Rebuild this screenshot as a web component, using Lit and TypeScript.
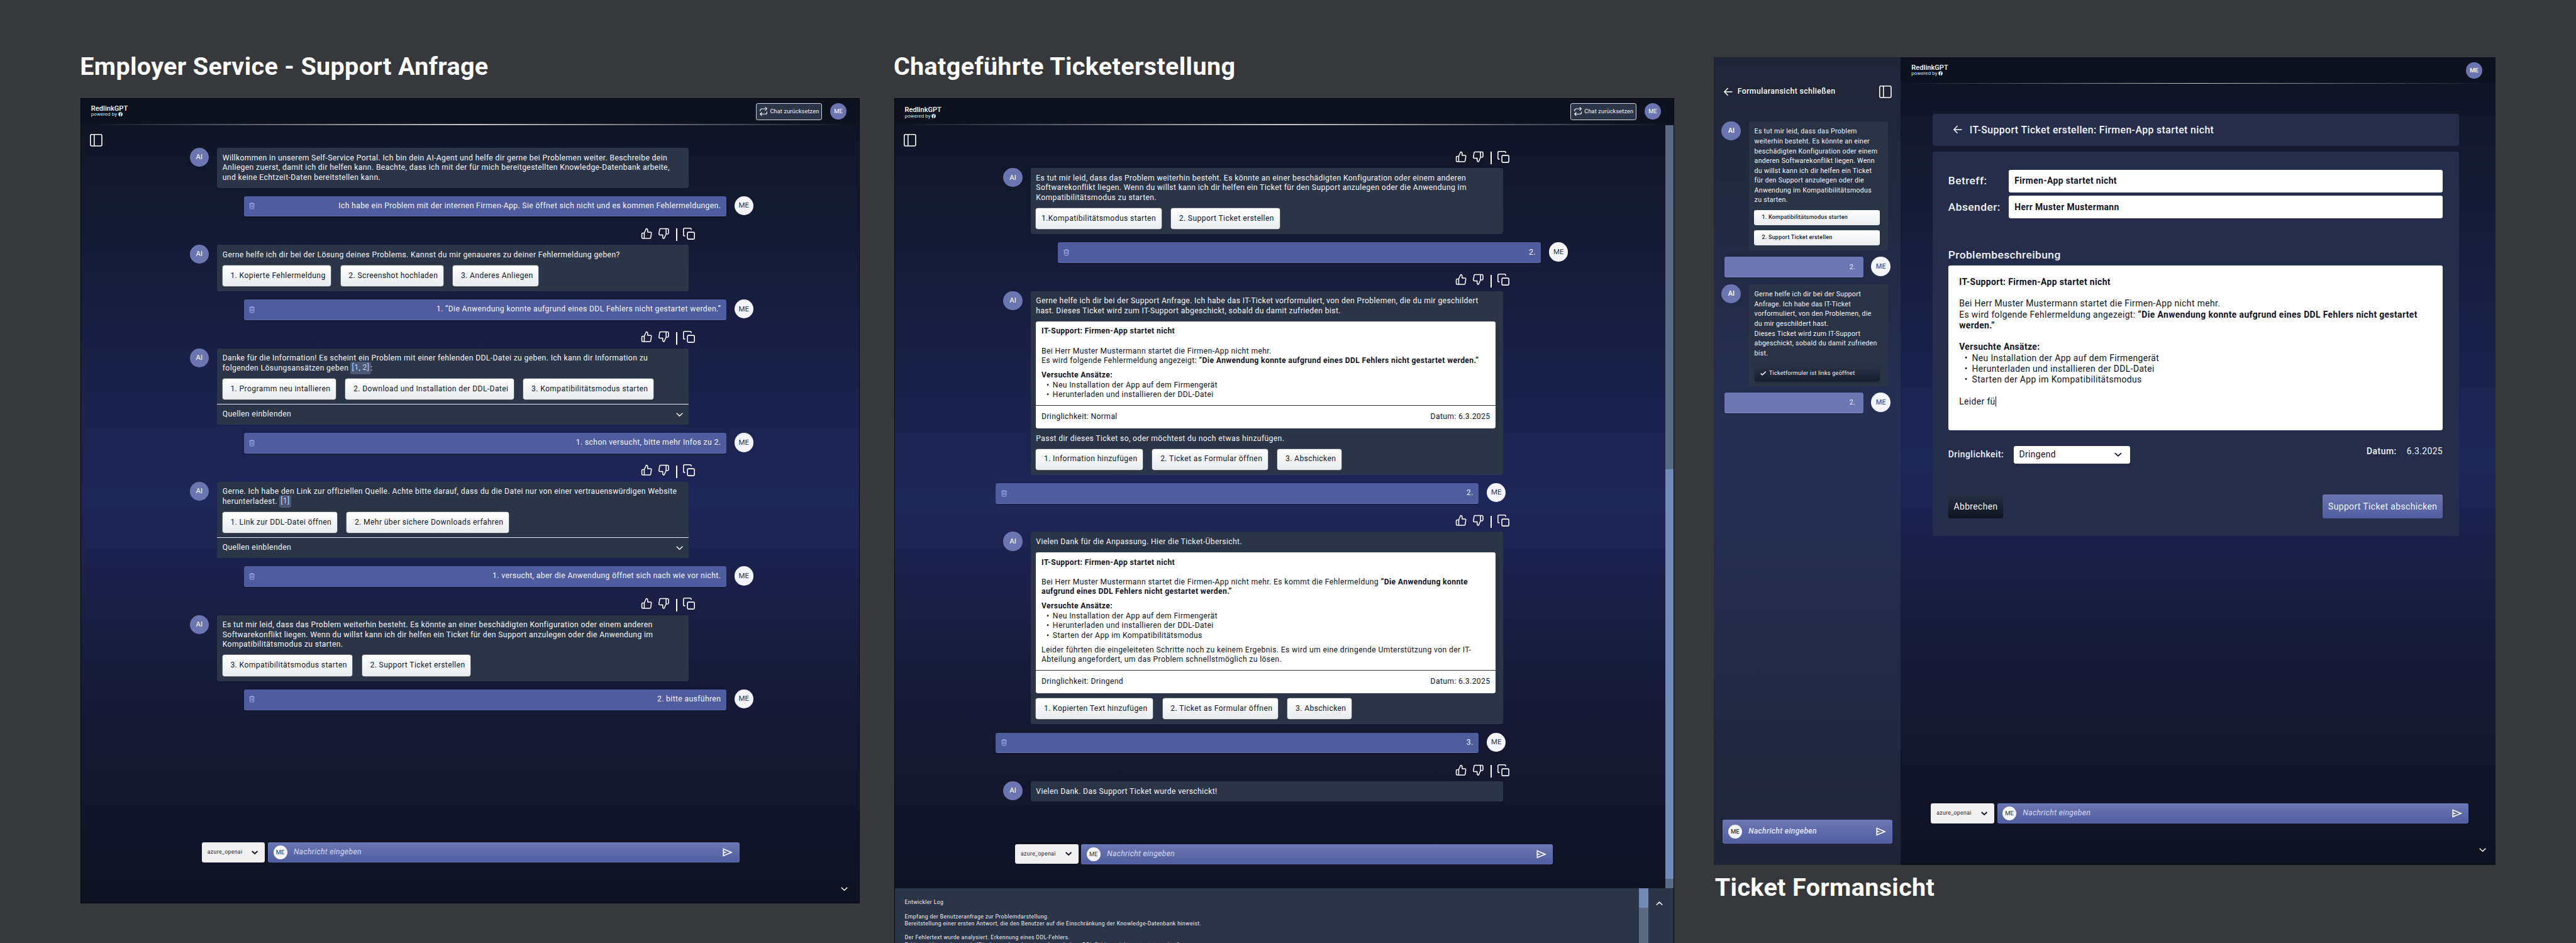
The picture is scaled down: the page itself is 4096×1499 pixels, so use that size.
import { LitElement, html, svg, css, nothing, TemplateResult } from "lit";
import { customElement } from "lit/decorators.js";
import { classMap } from "lit/directives/class-map.js";

type Content = TemplateResult | string;

const icon = (cls: string, box: string, body: unknown) =>
  html`<svg class="icon ${cls}" viewBox=${box} aria-hidden="true">${body}</svg>`;

const thumbUp = () =>
  icon("i-thumb", "0 0 24 24", svg`<path d="M14 9V5a3 3 0 0 0-3-3l-4 9v11h11.28a2 2 0 0 0 2-1.7l1.38-9a2 2 0 0 0-2-2.3zM7 22H4a2 2 0 0 1-2-2v-7a2 2 0 0 1 2-2h3"/>`);
const thumbDown = () =>
  icon("i-thumb", "0 0 24 24", svg`<path d="M10 15v4a3 3 0 0 0 3 3l4-9V2H5.72a2 2 0 0 0-2 1.7l-1.38 9a2 2 0 0 0 2 2.3zm7-13h2.67A2.31 2.31 0 0 1 22 4v7a2.31 2.31 0 0 1-2.33 2H17"/>`);
const copy = () =>
  icon("i-copy", "0 0 24 24", svg`<rect x="9" y="9" width="14" height="14" rx="2"/><path d="M3.6 16.6c-1.4 0-2.6-1-2.6-2.4V3.4C1 2 2 1 3.4 1h10.8c1.4 0 2.4 1 2.4 2.6"/>`);
const sidebarIcon = () =>
  icon("i-panel", "0 0 25 25", svg`<rect x="1" y="1" width="23" height="23" rx="2.5"/><path d="M8.6 1v23"/>`);
const repeat = () =>
  icon("i-repeat", "0 0 24 24", svg`<path d="M17 1l4 4-4 4M3 11V9a4 4 0 0 1 4-4h14M7 23l-4-4 4-4M21 13v2a4 4 0 0 1-4 4H3"/>`);
const trash = () =>
  icon("i-trash", "0 0 12 14", svg`<path d="M.4 2.4h11.2M1.8 2.4v9.2c0 1 .5 1.6 1.5 1.6h5.4c1 0 1.5-.6 1.5-1.6V2.4M3.8 2.2V1h4.4v1.2M4.4 5v5.6M7.6 5v5.6"/>`);
const send = () =>
  icon("i-send", "0 0 24 24", svg`<path d="M3 20V4l19 8-19 8zm2-3l11.85-5L5 7v3.5l6 1.5-6 1.5V17z"/>`);
const chevron = (cls = "") => icon(`i-chev ${cls}`, "0 0 14 8", svg`<path d="M1 1l6 5.6L13 1"/>`);
const arrowLeft = () => icon("i-arrow", "0 0 18 18", svg`<path d="M17.5 9H1.6M8.6 1.4L1.2 9l7.4 7.6"/>`);
const check = () => icon("i-check", "0 0 12 9", svg`<path d="M1 4.6l3 3L11 1"/>`);
const brandMark = () =>
  html`<svg class="mark" viewBox="0 0 10 10" aria-hidden="true"><circle cx="5" cy="5" r="4.8" fill="#c5e8f6"></circle><path d="M5 9.9V4.6c0-1.3.7-2 2.1-2" fill="none" stroke="#0e121e" stroke-width="1.4"></path></svg>`;

const brand = () => html`
  <div class="brand">
    <span class="brand-name">RedlinkGPT</span>
    <span class="brand-sub">powered by ${brandMark()}</span>
  </div>`;

const header = (withReset: boolean) => html`
  <header class="head">
    ${brand()}
    <div class="head-right">
      ${withReset ? html`<button class="reset">${repeat()}<span>Chat zurücksetzen</span></button>` : nothing}
      <span class=${classMap({ "head-me": true, strong: !withReset })}>ME</span>
    </div>
  </header>
  <div class="rule"></div>`;

const actions = () => html`
  <div class="actions">${thumbUp()}${thumbDown()}<i class="bar"></i>${copy()}</div>`;

const options = (labels: string[]) => html`
  <div class="options">
    ${labels.map((l) => html`<button class=${classMap({ opt: true, tight: !/^\d\. /.test(l) })}>${l}</button>`)}
  </div>`;

const sources = () => html`
  <div class="sources"><span>Quellen einblenden</span>${chevron()}</div>`;

const ai = (body: unknown) => html`
  <div class="row ai"><span class="avatar">AI</span><div class="bubble">${body}</div></div>`;

const me = (text: string, shifted = false) => html`
  <div class=${classMap({ row: true, user: true, shifted })}>
    <div class="ubar">${trash()}<span>${text}</span></div>
    <span class="avatar light">ME</span>
  </div>`;

const composer = () => html`
  <div class="composer">
    <div class="model"><span>azure_openai</span>${chevron("dark")}</div>
    <div class="input"><span class="input-me">ME</span><span class="ph">Nachricht eingeben</span>${send()}</div>
  </div>`;

const ticket = (body: Content, urgency: string) => html`
  <div class="ticket">
    <div class="ticket-body">
      <p class="b">IT-Support: Firmen-App startet nicht</p>
      ${body}
    </div>
    <div class="ticket-foot"><span>Dringlichkeit: ${urgency}</span><span>Datum: 6.3.2025</span></div>
  </div>`;

const sorry = html`<p>Es tut mir leid, dass das Problem weiterhin besteht. Es könnte an einer beschädigten Konfiguration oder einem anderen<br />Softwarekonflikt liegen. Wenn du willst kann ich dir helfen ein Ticket für den Support anzulegen oder die Anwendung im<br />Kompatibilitätsmodus zu starten.</p>`;

@customElement("app-root")
export class AppRoot extends LitElement {
  static styles = css`
    :host { display: block; width: 100vw; height: 100vh; overflow: hidden; background: #37383c; }
    * { box-sizing: border-box; }
    p, h1, ul { margin: 0; padding: 0; }
    button { font: inherit; letter-spacing: inherit; border: 0; margin: 0; }
    .canvas {
      zoom: 0.790276; width: 5183px; height: 1897px; overflow: hidden; display: flex; align-items: flex-start;
      padding-left: 162px; font: 400 15.4px/19.7px Roboto, "Liberation Sans", sans-serif; letter-spacing: 0.47px;
      color: #f3f5fb; white-space: nowrap;
    }
    .col { display: flex; flex-direction: column; flex: none; }
    .c1 { width: 1568px; padding-top: 105.6px; }
    .c2 { width: 1569.5px; padding-top: 105.6px; margin-left: 69px; }
    .c3 { width: 1573px; padding-top: 115px; margin-left: 79.5px; }
    h1 { font: 700 50px/58.6px Roboto, sans-serif; letter-spacing: 0.45px; color: #fff; margin: 0 0 32.8px -1px; }
    .c3 h1 { margin: 16px 0 0 2.5px; }

    .icon { display: block; flex: none; fill: none; stroke: #fff; stroke-width: 2; stroke-linejoin: round; overflow: visible; }
    .i-thumb { width: 23.5px; height: 23.5px; }
    .i-copy { width: 24px; height: 24px; stroke-linecap: round; }
    .i-panel { width: 25px; height: 25px; }
    .i-repeat { width: 18px; height: 18px; stroke-width: 1.9; stroke-linecap: round; }
    .i-trash { width: 11.5px; height: 13.4px; stroke: #a9b2ea; stroke-width: 1.3; }
    .i-send { width: 25px; height: 25px; fill: #fff; stroke: none; }
    .i-chev { width: 14px; height: 8px; stroke-linejoin: miter; }
    .i-chev.dark { stroke: #10131f; width: 13px; stroke-width: 2.6; }
    .i-chev.up { transform: rotate(180deg); }
    .i-arrow { width: 17.5px; height: 17.5px; stroke-linejoin: miter; }
    .i-check { width: 12px; height: 9px; }

    .board {
      display: flex; flex-direction: column; position: relative; height: 1620px; border: 1px solid #05070c;
      background: linear-gradient(#0f131f 0, #0f131f 53px, #101525 53px, #1f2659 50%, #181c3d 68%, #0f1220 100%);
    }
    .tall { height: 1700px; background-size: 100% 1620px; background-repeat: no-repeat; }
    .head { height: 51px; flex: none; display: flex; justify-content: space-between; padding: 13.5px 25.5px 0 20px; background: #0e121e; }
    .rule { height: 2px; flex: none; margin: 0 16px; background: linear-gradient(90deg, transparent, #c9c6c4 50%, transparent); }
    .brand { display: flex; flex-direction: column; padding-top: 0; }
    .c2 .brand { padding-top: 2px; }
    .brand-name { font: 500 14px/14px Roboto; letter-spacing: 0.06px; color: #fff; }
    .brand-sub { font-size: 10px; line-height: 10px; letter-spacing: 0.1px; color: #c5e8f6; display: flex; align-items: center; gap: 2px; margin-top: -0.5px; }
    .c2 .brand-sub { margin-top: 1px; }
    .mark { width: 9px; height: 9px; }
    .head-right { display: flex; gap: 17px; margin-top: -4px; }
    .reset {
      height: 33.5px; width: 132.5px; display: flex; align-items: center; gap: 4.5px; padding: 0 0 0 4.5px; border: 1px solid #cdd2dc;
      border-radius: 4px; background: #2c3547; color: #f3f5fb; font-size: 11.5px; letter-spacing: 0.24px;
    }
    .head-me {
      width: 32.6px; height: 33px; border-radius: 50%; background: #6b76b1; color: #fff; font-size: 12px; letter-spacing: 0;
      display: flex; align-items: center; justify-content: center;
    }
    .strong { font-weight: 500; }

    .toggle { position: absolute; left: 17.8px; top: 71.8px; }
    .chat { display: flex; flex-direction: column; margin-left: 218.6px; width: 1134px; margin-top: 46.2px; }
    .c2 .chat { margin-left: 202px; width: 1153px; margin-top: 30.4px; }
    .row { display: flex; align-items: flex-start; gap: 16.5px; }
    .avatar {
      width: 38.3px; height: 38.3px; border-radius: 50%; background: #6b76b1; color: #fff; flex: none; letter-spacing: 0;
      display: flex; align-items: center; justify-content: center; font-size: 14.5px;
    }
    .light { background: #f3f4fc; color: #2c3547; }
    .c2 .ai { padding-left: 16.5px; }
    .bubble { width: 948.5px; border-radius: 4px; background: #2c3547; padding: 11px 11px 10.3px; display: flex; flex-direction: column; }
    .c2 .bubble { width: 950.3px; }
    .user { margin-top: 16.7px; justify-content: flex-end; }
    .shifted { margin-right: 125.5px; }
    .ubar {
      width: 970.5px; height: 41.4px; border-radius: 4px; background: #4f5d9e; border-bottom: 1px solid #606db3; box-shadow: 0 1px 2px rgba(0, 0, 0, 0.4);
      padding: 0 10.6px 0 11px; display: flex; align-items: center; justify-content: space-between;
    }
    .c2 .ubar { width: 972px; }
    .options { display: flex; gap: 19.4px; margin-top: 10.6px; }
    .opt {
      height: 42px; padding: 0 11px 0 16px; border-radius: 4px; color: #141827; background: linear-gradient(#fff, #e9ebef);
      box-shadow: 0 0 0 0.6px rgba(255, 255, 255, 0.5), 0 1px 2px rgba(0, 0, 0, 0.4);
    }
    .tight { padding-left: 11px; }
    .actions { height: 56.5px; display: flex; padding: 21.9px 0 0 908px; }
    .c2 .actions { padding-left: 926.2px; }
    .actions .i-thumb + .i-thumb { margin-left: 10.3px; }
    .bar { width: 2px; height: 25px; background: #fff; margin: 2px 12.3px 0 13.2px; }
    .sources {
      height: 42.4px; margin: 8.4px -11px -10.3px; padding: 0 11px; border-top: 2px solid #e3e7f0; display: flex;
      align-items: center; justify-content: space-between;
    }
    .ref { background: #4a5875; color: #c4d5f0; border-radius: 4px; padding: 3px 3px 4px; margin: 0 -0.5px; }

    .ticket { margin: 10.3px 4px 0 0; border-radius: 4px; background: #fff; color: #10131f; }
    .ticket-body { padding: 11px 11px 10.5px; }
    .ticket-body p + p, .gap-l { margin-top: 19.7px; }
    .ticket-body .gap-s { margin-top: 9.2px; }
    .b { font-weight: 700; }
    ul { list-style: none; }
    li { display: flex; padding-left: 10.2px; }
    li::before { content: "•"; width: 12.4px; font-size: 15.4px; letter-spacing: 0; }
    .ticket-foot { border-top: 1.5px solid #2c3547; padding: 13px 10.5px 12.6px 11px; display: flex; justify-content: space-between; }
    .follow { margin-top: 11.4px; }

    .composer { position: absolute; left: 243px; top: 1496.5px; display: flex; gap: 6px; }
    .c2 .composer { left: 242.5px; top: 1499.5px; }
    .c1 .input, .c1 .model { height: 39.6px; }
    .model {
      width: 127px; height: 40px; border-radius: 4px; background: #f0f0f1; color: #1d2233; display: flex; align-items: center;
      justify-content: space-between; padding: 0 13.5px 0 11px; font-size: 11px; letter-spacing: 0.46px;
    }
    .input {
      width: 948.5px; height: 41px; border-radius: 4px; background: linear-gradient(#6c78b2, #505d9f); display: flex; align-items: center;
      padding: 0 11px 0 10.7px; box-shadow: inset 0 0 0 1px rgba(108, 122, 200, 0.6);
    }
    .input-me {
      width: 28px; height: 28px; border-radius: 50%; background: #f3f4fc; color: #2c3547; font-size: 12px; letter-spacing: 0;
      display: flex; align-items: center; justify-content: center;
    }
    .ph { font-style: italic; margin-left: 13px; color: #d3d9f7; flex: 1; letter-spacing: 0.43px; }
    .corner { position: absolute; right: 22.5px; bottom: 24px; }

    .track { position: absolute; right: 0; top: 53px; width: 17px; height: 1535px; background: #5b6a83; display: flex; flex-direction: column; }
    .thumb { margin-top: 693px; height: 823.5px; background: #738ab5; }
    .log {
      position: absolute; left: 0; right: 0; top: 1588px; height: 112px; background: #2c3547; border-radius: 3px 3px 0 0;
      display: flex; font-size: 11px; line-height: 14.2px; letter-spacing: 0.49px; color: #eceff6;
    }
    .log-text { flex: 1; padding: 22.5px 0 0 20px; }
    .log-track { width: 18.5px; background: #5b6a83; }
    .log-thumb { display: block; height: 39.5px; background: #738ab5; }
    .log-tools { width: 50.5px; display: flex; justify-content: flex-start; padding: 26.5px 0 0 15px; }

    .split { height: 1625px; display: flex; }
    .side {
      width: 376px; display: flex; flex-direction: column; position: relative; font-size: 13.5px; letter-spacing: 0.32px;
      background: linear-gradient(#202536, #272f55 50%, #20253a 96%, #1f2436);
    }
    .side-head { display: flex; align-items: center; padding: 0 18.5px 0 21px; margin-top: 57px; height: 25px; font-weight: 500; font-size: 15.5px; letter-spacing: 0.52px; color: #fff; }
    .side-head span { flex: 1; margin-left: 9.5px; }
    .side-chat { display: flex; flex-direction: column; gap: 12.8px; margin: 47px 19px 0 16px; }
    .side .row { gap: 16px; }
    .side .avatar { width: 39px; height: 38.6px; font-weight: 500; font-size: 14px; }
    .side .light { color: #4c59a5; }
    .side .bubble { width: 279.7px; background: #2b3446; padding: 11px 11px 10.8px; }
    .side .user { margin: 0; justify-content: flex-start; padding-left: 5.3px; gap: 15px; }
    .side .ubar { width: 280.7px; height: 41.8px; background: #6b77b2; justify-content: flex-end; padding-right: 17px; border-bottom-color: #7c88c8; }
    .sopts { display: flex; flex-direction: column; gap: 10px; margin-top: 10px; }
    .sopt {
      height: 30.4px; width: 253.4px; margin-left: -0.5px; border-radius: 4px; background: linear-gradient(#fff, #eaecef); color: #171b2a; text-align: left;
      padding: 0 0 0 15.5px; font-size: 11.5px; letter-spacing: 0.24px; font-weight: 500;
    }
    .sdone {
      height: 30.5px; width: 252.5px; margin-top: 15.5px; border-radius: 4px; background: linear-gradient(#2b3446, #161c2c); display: flex; align-items: center;
      gap: 5.5px; padding-left: 12px; font-size: 11.5px; letter-spacing: 0.3px; box-shadow: 0 2px 4px rgba(0, 0, 0, 0.3);
    }
    .side .input { position: absolute; left: 18.4px; top: 1533.3px; width: 341.4px; height: 49px; font-weight: 500; font-size: 15.4px; }
    .side .ph { color: #e3e7fb; }

    .main { flex: 1; position: relative; display: flex; flex-direction: column; background: linear-gradient(#101525 53px, #1f2659 50%, #181c3d 68%, #0f1220 100%); }
    .main .head { height: 51.5px; padding: 14px 26.5px 0 22px; }
    .form-head {
      margin: 60px 73.5px 0 64px; height: 65.4px; border-radius: 4px; background: #252d4b; display: flex; align-items: center; gap: 15px;
      padding-left: 42.5px; font-size: 20px; font-weight: 500; letter-spacing: 0.52px;
    }
    .form {
      margin: 11px 73.5px 0 64px; height: 773px; border-radius: 4px; background: #252d4b; padding: 36.8px 32.7px 0 32px;
      display: flex; flex-direction: column; font-size: 17.6px; line-height: 21.83px; letter-spacing: 0.47px;
    }
    .field { display: flex; align-items: center; height: 45.4px; margin-bottom: 6.8px; }
    .lbl { width: 122px; font-size: 22px; font-weight: 500; letter-spacing: 0.55px; }
    .box { flex: 1; height: 45.4px; border-radius: 4px; background: #fff; color: #10131f; padding: 0 11.4px; display: flex; align-items: center; font-weight: 700; letter-spacing: 0.48px; }
    .sub { font-size: 22px; line-height: 26px; font-weight: 500; letter-spacing: 0.53px; margin-top: 54px; }
    .area { height: 331.2px; margin-top: 8.3px; border-radius: 4px; background: #fff; color: #10131f; padding: 22.3px 22px; letter-spacing: 0.48px; }
    .area .gap-l { margin-top: 21.83px; }
    .area li { padding-left: 11px; }
    .area li::before { width: 14.8px; font-size: 17.6px; }
    .caret { display: inline-block; width: 1.3px; height: 20px; background: #10131f; vertical-align: -4px; margin-left: 0.5px; }
    .meta { display: flex; margin-top: 31.3px; align-items: flex-start; justify-content: space-between; }
    .urg { display: flex; align-items: center; }
    .m { font-weight: 500; letter-spacing: 0.62px; }
    .select {
      margin-left: 20px; width: 233.7px; height: 35.5px; border-radius: 4px; background: #fff; color: #10131f; display: flex; align-items: center;
      justify-content: space-between; padding: 0 16px 0 10.6px;
    }
    .select .i-chev { width: 15px; height: 9px; stroke-width: 2; }
    .date { display: flex; gap: 20.5px; }
    .buttons { display: flex; justify-content: space-between; margin-top: 62.4px; }
    .btn { height: 48.4px; border-radius: 4px; color: #f3f5fb; padding: 0 11px; letter-spacing: 0.5px; background: linear-gradient(#263042, #0f1320); }
    .primary { background: linear-gradient(#6b76b1, #515e9f); }
    .main .composer { left: 61.4px; top: 1501px; }
    .main .corner { right: 19px; bottom: 26px; }
  `;

  private support() {
    return html`
      <section class="col c1">
        <h1>Employer Service - Support Anfrage</h1>
        <div class="board">
          ${header(true)}
          <div class="toggle">${sidebarIcon()}</div>
          <div class="chat">
            ${ai(html`<p>Willkommen in unserem Self-Service Portal. Ich bin dein AI-Agent und helfe dir gerne bei Problemen weiter. Beschreibe dein<br />Anliegen zuerst, damit ich dir helfen kann. Beachte, dass ich mit der für mich bereitgestellten Knowledge-Datenbank arbeite,<br />und keine Echtzeit-Daten bereitstellen kann.</p>`)}
            ${me("Ich habe ein Problem mit der internen Firmen-App. Sie öffnet sich nicht und es kommen Fehlermeldungen.")}
            ${actions()}
            ${ai(html`<p>Gerne helfe ich dir bei der Lösung deines Problems. Kannst du mir genaueres zu deiner Fehlermeldung geben?</p>
              ${options(["1. Kopierte Fehlermeldung", "2. Screenshot hochladen", "3. Anderes Anliegen"])}`)}
            ${me("1. “Die Anwendung konnte aufgrund eines DDL Fehlers nicht gestartet werden.”")}
            ${actions()}
            ${ai(html`<p>Danke für die Information! Es scheint ein Problem mit einer fehlenden DDL-Datei zu geben. Ich kann dir Information zu<br />folgenden Lösungsansätzen geben <span class="ref">[1, 2]</span>:</p>
              ${options(["1. Programm neu intallieren", "2. Download und Installation der DDL-Datei", "3. Kompatibilitätsmodus starten"])}
              ${sources()}`)}
            ${me("1. schon versucht, bitte mehr Infos zu 2.")}
            ${actions()}
            ${ai(html`<p>Gerne. Ich habe den Link zur offiziellen Quelle. Achte bitte darauf, dass du die Datei nur von einer vertrauenswürdigen Website<br />herunterladest. <span class="ref">[1]</span></p>
              ${options(["1. Link zur DDL-Datei öffnen", "2. Mehr über sichere Downloads erfahren"])}
              ${sources()}`)}
            ${me("1. versucht, aber die Anwendung öffnet sich nach wie vor nicht.")}
            ${actions()}
            ${ai(html`${sorry}${options(["3. Kompatibilitätsmodus starten", "2. Support Ticket erstellen"])}`)}
            ${me("2. bitte ausführen")}
          </div>
          ${composer()}
          <div class="corner">${chevron()}</div>
        </div>
      </section>`;
  }

  private guided() {
    return html`
      <section class="col c2">
        <h1>Chatgeführte Ticketerstellung</h1>
        <div class="board tall">
          ${header(true)}
          <div class="toggle">${sidebarIcon()}</div>
          <div class="chat">
            ${actions()}
            ${ai(html`${sorry}${options(["1.Kompatibilitätsmodus starten", "2. Support Ticket erstellen"])}`)}
            ${me("2.")}
            ${actions()}
            ${ai(html`<p>Gerne helfe ich dir bei der Support Anfrage. Ich habe das IT-Ticket vorformuliert, von den Problemen, die du mir geschildert<br />hast. Dieses Ticket wird zum IT-Support abgeschickt, sobald du damit zufrieden bist.</p>
              ${ticket(html`<p>Bei Herr Muster Mustermann startet die Firmen-App nicht mehr.<br />Es wird folgende Fehlermeldung angezeigt: <b>“Die Anwendung konnte aufgrund eines DDL Fehlers nicht gestartet werden.”</b></p>
                <p class="b gap-s">Versuchte Ansätze:</p>
                <ul><li>Neu Installation der App auf dem Firmengerät</li><li>Herunterladen und installieren der DDL-Datei</li></ul>`, "Normal")}
              <p class="follow">Passt dir dieses Ticket so, oder möchtest du noch etwas hinzufügen.</p>
              ${options(["1. Information hinzufügen", "2. Ticket as Formular öffnen", "3. Abschicken"])}`)}
            ${me("2.", true)}
            ${actions()}
            ${ai(html`<p>Vielen Dank für die Anpassung. Hier die Ticket-Übersicht.</p>
              ${ticket(html`<p>Bei Herr Muster Mustermann startet die Firmen-App nicht mehr. Es kommt die Fehlermeldung <b>“Die Anwendung konnte<br />aufgrund eines DDL Fehlers nicht gestartet werden.”</b></p>
                <p class="b gap-s">Versuchte Ansätze:</p>
                <ul><li>Neu Installation der App auf dem Firmengerät</li><li>Herunterladen und installieren der DDL-Datei</li><li>Starten der App im Kompatibilitätsmodus</li></ul>
                <p class="gap-s">Leider führten die eingeleiteten Schritte noch zu keinem Ergebnis. Es wird um eine dringende Umterstützung von der IT-<br />Abteilung angefordert, um das Problem schnellstmöglich zu lösen.</p>`, "Dringend")}
              ${options(["1. Kopierten Text hinzufügen", "2. Ticket as Formular öffnen", "3. Abschicken"])}`)}
            ${me("3.", true)}
            ${actions()}
            ${ai(html`<p>Vielen Dank. Das Support Ticket wurde verschickt!</p>`)}
          </div>
          ${composer()}
          <div class="track"><div class="thumb"></div></div>
          <div class="log">
            <div class="log-text">
              <p>Entwickler Log</p><br />
              <p>Empfang der Benutzeranfrage zur Problemdarstellung.</p>
              <p>Bereitstellung einer ersten Antwort, die den Benutzer auf die Einschränkung der Knowledge-Datenbank hinweist.</p><br />
              <p>Der Fehlertext wurde analysiert. Erkennung eines DDL-Fehlers.</p>
              <p>Fehlermeldung erkannt als “Die Anwendung konnte aufgrund eines DDL Fehlers nicht gestartet werden.”</p>
            </div>
            <div class="log-track"><span class="log-thumb"></span></div>
            <div class="log-tools">${chevron("up")}</div>
          </div>
        </div>
      </section>`;
  }

  private formView() {
    return html`
      <section class="col c3">
        <div class="split">
          <aside class="side">
            <div class="side-head">${arrowLeft()}<span>Formularansicht schließen</span>${sidebarIcon()}</div>
            <div class="side-chat">
              ${ai(html`<p>Es tut mir leid, dass das Problem<br />weiterhin besteht. Es könnte an einer<br />beschädigten Konfiguration oder einem<br />anderen Softwarekonflikt liegen. Wenn<br />du willst kann ich dir helfen ein Ticket<br />für den Support anzulegen oder die<br />Anwendung im Kompatibilitätsmodus<br />zu starten.</p>
                <div class="sopts"><button class="sopt">1. Kompatibilitätsmodus starten</button><button class="sopt">2. Support Ticket erstellen</button></div>`)}
              <div class="row user"><div class="ubar">2.</div><span class="avatar light">ME</span></div>
              ${ai(html`<p>Gerne helfe ich dir bei der Support<br />Anfrage. Ich habe das IT-Ticket<br />vorformuliert, von den Problemen, die<br />du mir geschildert hast.<br />Dieses Ticket wird zum IT-Support<br />abgeschickt, sobald du damit zufrieden<br />bist.</p>
                <div class="sdone">${check()}<span>Ticketformuler ist links geöffnet</span></div>`)}
              <div class="row user"><div class="ubar">2.</div><span class="avatar light">ME</span></div>
            </div>
            <div class="input"><span class="input-me">ME</span><span class="ph">Nachricht eingeben</span>${send()}</div>
          </aside>
          <div class="main">
            ${header(false)}
            <div class="form-head">${arrowLeft()}<span>IT-Support Ticket erstellen: Firmen-App startet nicht</span></div>
            <div class="form">
              <div class="field"><span class="lbl">Betreff:</span><span class="box">Firmen-App startet nicht</span></div>
              <div class="field"><span class="lbl">Absender:</span><span class="box">Herr Muster Mustermann</span></div>
              <div class="sub">Problembeschreibung</div>
              <div class="area">
                <p class="b">IT-Support: Firmen-App startet nicht</p>
                <p class="gap-l">Bei Herr Muster Mustermann startet die Firmen-App nicht mehr.<br />Es wird folgende Fehlermeldung angezeigt: <b>“Die Anwendung konnte aufgrund eines DDL Fehlers nicht gestartet<br />werden.”</b></p>
                <p class="b gap-l">Versuchte Ansätze:</p>
                <ul><li>Neu Installation der App auf dem Firmengerät</li><li>Herunterladen und installieren der DDL-Datei</li><li>Starten der App im Kompatibilitätsmodus</li></ul>
                <p class="gap-l">Leider fü<span class="caret"></span></p>
              </div>
              <div class="meta">
                <div class="urg"><span class="m">Dringlichkeit:</span><span class="select"><span>Dringend</span>${chevron("dark")}</span></div>
                <div class="date"><span class="m">Datum:</span><span>6.3.2025</span></div>
              </div>
              <div class="buttons"><button class="btn">Abbrechen</button><button class="btn primary">Support Ticket abschicken</button></div>
            </div>
            ${composer()}
            <div class="corner">${chevron()}</div>
          </div>
        </div>
        <h1>Ticket Formansicht</h1>
      </section>`;
  }

  render() {
    return html`<div class="canvas">${this.support()}${this.guided()}${this.formView()}</div>`;
  }
}
